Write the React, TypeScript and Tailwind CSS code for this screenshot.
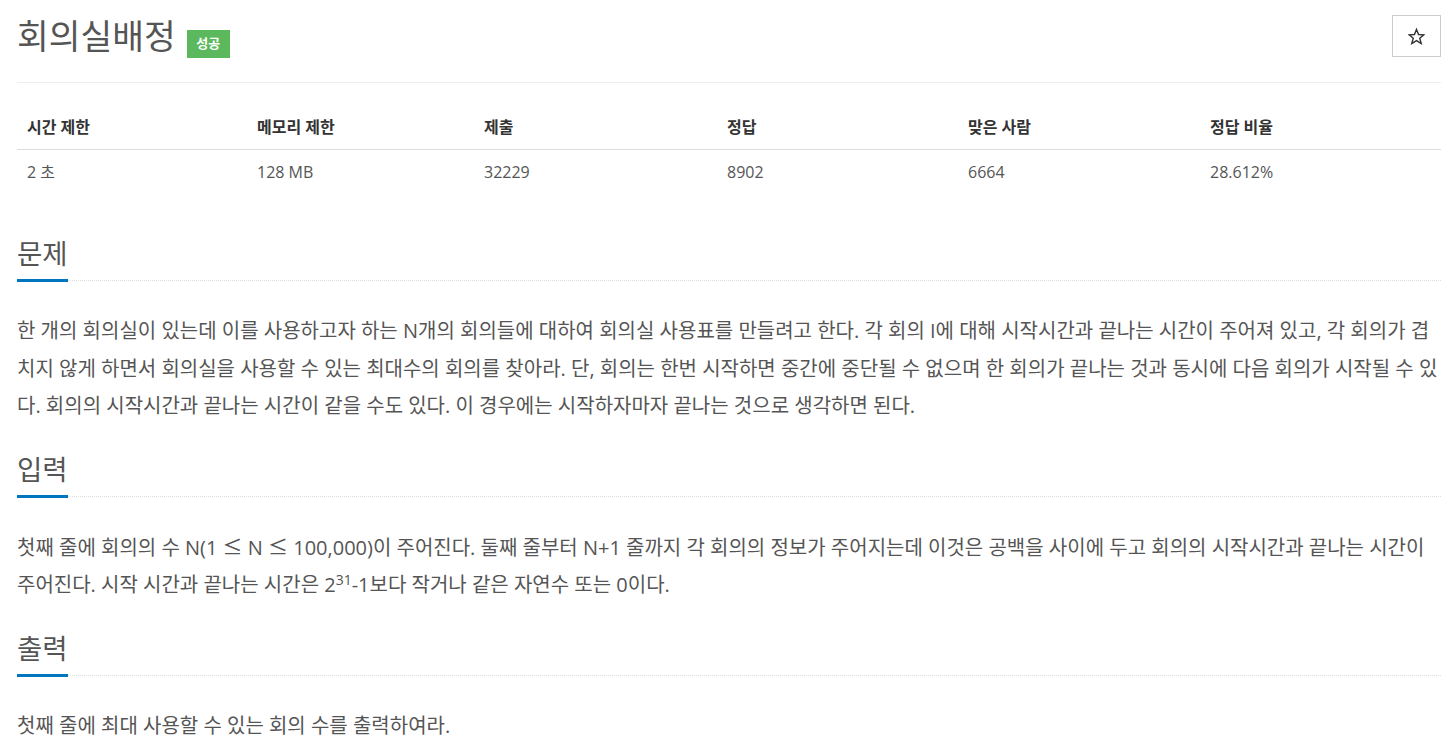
export default function App() {
  const cols = "grid grid-cols-[230px_227px_243px_241px_242px_1fr]";
  const heads = ["시간 제한", "메모리 제한", "제출", "정답", "맞은 사람", "정답 비율"];
  const vals = ["2 초", "128 MB", "32229", "8902", "6664", "28.612%"];

  const Heading = ({ children, mt }: { children: string; mt: string }) => (
    <div className={`flex border-b border-dotted border-[#dddddd] ${mt}`}>
      <h2 className="-mb-[2px] border-b-[3px] border-[#0076c0] pb-[7px] text-[27.5px] font-normal leading-[36px] text-[#555555]">
        {children}
      </h2>
    </div>
  );

  const Le = () => <span className="font-['Noto_Sans_CJK_KR',sans-serif]">≤</span>;

  return (
    <div className="min-h-screen bg-white pl-[17px] pr-[12px] font-['Open_Sans','Noto_Sans_CJK_KR',sans-serif] text-[#555555]">
      <div className="flex items-start justify-between border-b border-[#eeeeee] pt-[15px] pb-[24px]">
        <div className="flex items-start">
          <h1 className="text-[34.5px] font-normal leading-[42px] text-[#555555]">회의실배정</h1>
          <span className="ml-[11px] mt-[15px] flex h-[28px] w-[43px] items-center justify-center bg-[#5cb85c] text-[13px] font-bold text-white">
            성공
          </span>
        </div>
        <button className="flex h-[42px] w-[49px] items-center justify-center border border-[#cccccc] bg-white">
          <svg width="17" height="17" viewBox="0 0 24 24" fill="none" stroke="#333333" strokeWidth="2" strokeLinejoin="miter">
            <polygon points="12,2 14.9,9.2 22.5,9.6 16.6,14.5 18.6,21.9 12,17.7 5.4,21.9 7.4,14.5 1.5,9.6 9.1,9.2" />
          </svg>
        </button>
      </div>

      <div className="mt-[22px]">
        <div className={`${cols} h-[45px] items-center border-b border-[#dddddd]`}>
          {heads.map((h) => (
            <div key={h} className="pl-[10px] text-[16px] font-bold text-[#333333]">
              {h}
            </div>
          ))}
        </div>
        <div className={`${cols} h-[44px] items-center`}>
          {vals.map((v) => (
            <div key={v} className="pl-[10px] text-[16px] text-[#555555]">
              {v}
            </div>
          ))}
        </div>
      </div>

      <Heading mt="mt-[42px]">문제</Heading>
      <p className="mt-[31px] whitespace-nowrap text-[20px] leading-[37.5px]">
        한 개의 회의실이 있는데 이를 사용하고자 하는 N개의 회의들에 대하여 회의실 사용표를 만들려고 한다. 각 회의 I에 대해 시작시간과 끝나는 시간이 주어져 있고, 각 회의가 겹
        <br />
        치지 않게 하면서 회의실을 사용할 수 있는 최대수의 회의를 찾아라. 단, 회의는 한번 시작하면 중간에 중단될 수 없으며 한 회의가 끝나는 것과 동시에 다음 회의가 시작될 수 있
        <br />
        다. 회의의 시작시간과 끝나는 시간이 같을 수도 있다. 이 경우에는 시작하자마자 끝나는 것으로 생각하면 된다.
      </p>

      <Heading mt="mt-[27px]">입력</Heading>
      <p className="mt-[31px] whitespace-nowrap text-[20px] leading-[37.5px]">
        첫째 줄에 회의의 수 N(1 <Le /> N <Le /> 100,000)이 주어진다. 둘째 줄부터 N+1 줄까지 각 회의의 정보가 주어지는데 이것은 공백을 사이에 두고 회의의 시작시간과 끝나는 시간이
        <br />
        주어진다. 시작 시간과 끝나는 시간은 2<sup className="text-[14px]">31</sup>-1보다 작거나 같은 자연수 또는 0이다.
      </p>

      <Heading mt="mt-[27px]">출력</Heading>
      <p className="mt-[31px] whitespace-nowrap text-[20px] leading-[37.5px]">
        첫째 줄에 최대 사용할 수 있는 회의 수를 출력하여라.
      </p>
    </div>
  );
}
